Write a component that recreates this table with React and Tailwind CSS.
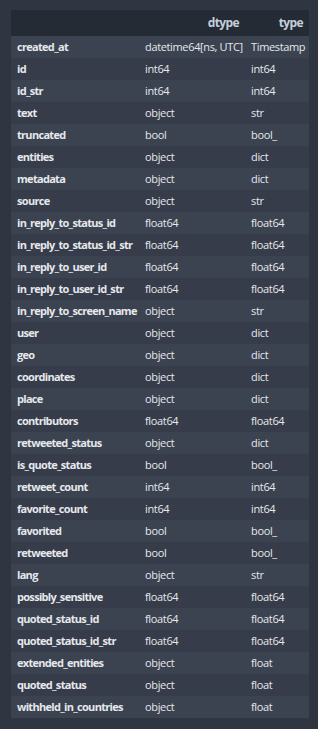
import React from "react";

const rows = [
  ["created_at", "datetime64[ns, UTC]", "Timestamp"],
  ["id", "int64", "int64"],
  ["id_str", "int64", "int64"],
  ["text", "object", "str"],
  ["truncated", "bool", "bool_"],
  ["entities", "object", "dict"],
  ["metadata", "object", "dict"],
  ["source", "object", "str"],
  ["in_reply_to_status_id", "float64", "float64"],
  ["in_reply_to_status_id_str", "float64", "float64"],
  ["in_reply_to_user_id", "float64", "float64"],
  ["in_reply_to_user_id_str", "float64", "float64"],
  ["in_reply_to_screen_name", "object", "str"],
  ["user", "object", "dict"],
  ["geo", "object", "dict"],
  ["coordinates", "object", "dict"],
  ["place", "object", "dict"],
  ["contributors", "float64", "float64"],
  ["retweeted_status", "object", "dict"],
  ["is_quote_status", "bool", "bool_"],
  ["retweet_count", "int64", "int64"],
  ["favorite_count", "int64", "int64"],
  ["favorited", "bool", "bool_"],
  ["retweeted", "bool", "bool_"],
  ["lang", "object", "str"],
  ["possibly_sensitive", "float64", "float64"],
  ["quoted_status_id", "float64", "float64"],
  ["quoted_status_id_str", "float64", "float64"],
  ["extended_entities", "object", "float"],
  ["quoted_status", "object", "float"],
  ["withheld_in_countries", "object", "float"],
];

export default function App() {
  return (
    <div
      className="w-[318px] h-[729px] bg-[#2f3541] pt-[10px] pl-[11px] text-[11px] text-[#e6e8ec] tracking-[-0.35px]"
      style={{ fontFamily: "'Open Sans', 'Noto Sans', sans-serif" }}
    >
      <table className="w-[298px] table-fixed border-collapse">
        <colgroup>
          <col className="w-[128px]" />
          <col className="w-[106px]" />
          <col className="w-[64px]" />
        </colgroup>
        <thead>
          <tr className="h-[26px] bg-[#252b34] text-[#c4cfdd] font-bold text-[12px] tracking-[-0.6px]">
            <th></th>
            <th className="text-right pr-[6px]">dtype</th>
            <th className="text-right pr-[6px]">type</th>
          </tr>
        </thead>
        <tbody>
          {rows.map((r, i) => (
            <tr
              key={r[0]}
              className={i % 2 === 0 ? "h-[22px] bg-[#3b4250]" : "h-[22px] bg-[#363c49]"}
            >
              <td className="pl-[6px] font-bold whitespace-nowrap tracking-[-0.7px]">{r[0]}</td>
              <td className="pl-[6px] whitespace-nowrap">{r[1]}</td>
              <td className="pl-[6px] whitespace-nowrap">{r[2]}</td>
            </tr>
          ))}
        </tbody>
      </table>
    </div>
  );
}
